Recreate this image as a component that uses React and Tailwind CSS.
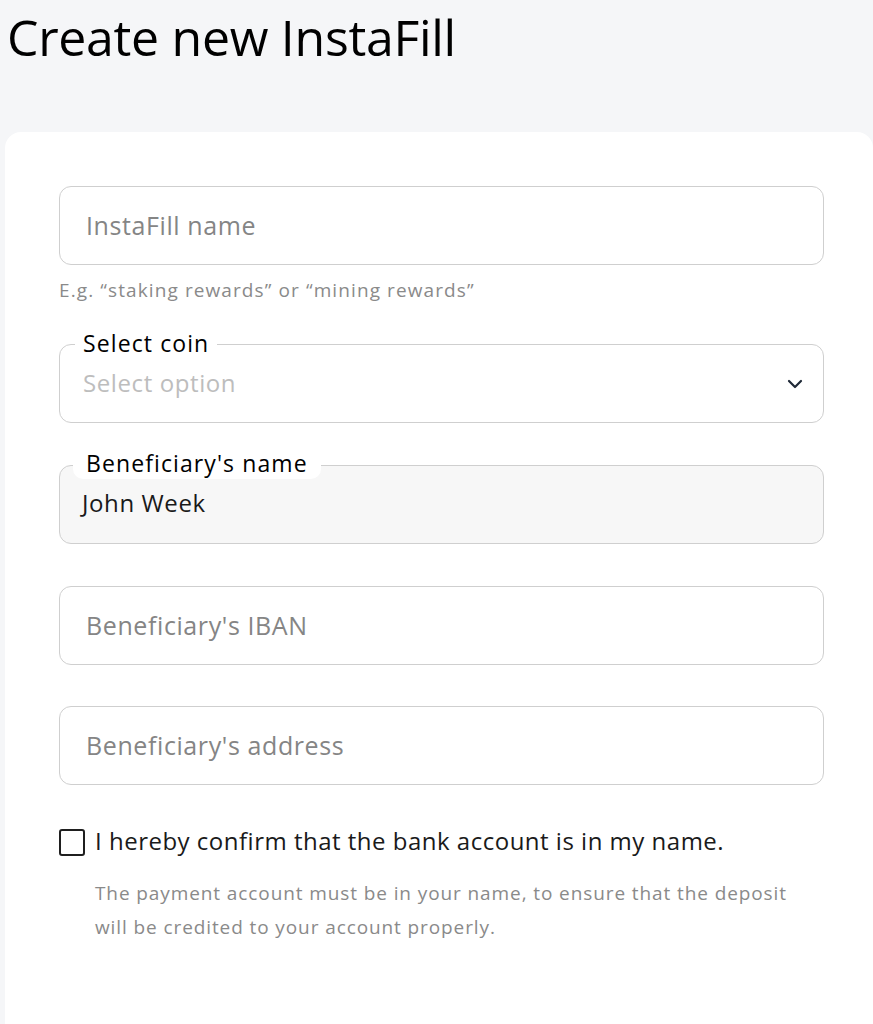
import React from "react";

function Field({ placeholder }) {
  return (
    <div className="h-[79px] rounded-[12px] border border-[#cfcfcf] bg-white flex items-center px-[26px]">
      <span className="text-[25px] leading-[34px] tracking-[0.6px] text-[#858585] -mt-[1px]">{placeholder}</span>
    </div>
  );
}

export default function App() {
  return (
    <div className="min-h-[1024px] bg-[#f5f6f8] font-['Open_Sans',sans-serif] overflow-hidden">
      <h1 className="pl-[7px] pt-[7px] h-[132px] text-[50px] leading-[60px] text-black font-normal tracking-[-0.3px]">
        Create new InstaFill
      </h1>
      <div className="ml-[5px] bg-white rounded-t-[16px] min-h-[892px] pl-[54px] pr-[49px] pt-[54px]">
        <Field placeholder="InstaFill name" />
        <p className="mt-[14px] text-[19px] leading-[22px] tracking-[1.1px] text-[#8a8a8a]">
          E.g. “staking rewards” or “mining rewards”
        </p>

        <div className="relative mt-[43px] h-[79px] rounded-[12px] border border-[#cfcfcf] bg-white flex items-center justify-between pl-[23px] pr-[20px]">
          <span className="absolute left-[15px] top-[-18px] bg-white px-[8px] text-[23px] leading-[32px] tracking-[1.1px] font-medium text-black">
            Select coin
          </span>
          <span className="text-[24px] leading-[34px] tracking-[0.6px] text-[#bdbdbd] -mt-[1px]">Select option</span>
          <svg width="16" height="10" viewBox="0 0 16 10" fill="none">
            <path d="M2 2l6 6 6-6" stroke="#1f2937" strokeWidth="2.2" strokeLinecap="round" strokeLinejoin="round" />
          </svg>
        </div>

        <div className="relative mt-[42px] h-[79px] rounded-[12px] border border-[#cfcfcf] bg-[#f7f7f7] flex items-center pl-[22px]">
          <span className="absolute left-[13px] top-[-19px] bg-white rounded-[10px] px-[13px] text-[23px] leading-[32px] tracking-[1.1px] font-medium text-black">
            Beneficiary's name
          </span>
          <span className="text-[24px] leading-[34px] tracking-[0.6px] text-[#1a1a1a] -mt-[3px]">John Week</span>
        </div>

        <div className="mt-[42px]">
          <Field placeholder="Beneficiary's IBAN" />
        </div>
        <div className="mt-[41px]">
          <Field placeholder="Beneficiary's address" />
        </div>

        <div className="mt-[42px] flex items-center gap-[10px]">
          <div className="w-[26px] h-[27px] rounded-[3px] border-2 border-[#1f1f1f] bg-white shrink-0" />
          <span className="text-[24px] leading-[32px] tracking-[0.5px] text-[#1a1a1a] -mt-[2px]">
            I hereby confirm that the bank account is in my name.
          </span>
        </div>
        <p className="mt-[19px] ml-[36px] text-[19px] leading-[34px] tracking-[0.9px] text-[#8a8a8a]">
          The payment account must be in your name, to ensure that the deposit will be credited to your account properly.
        </p>
      </div>
    </div>
  );
}
